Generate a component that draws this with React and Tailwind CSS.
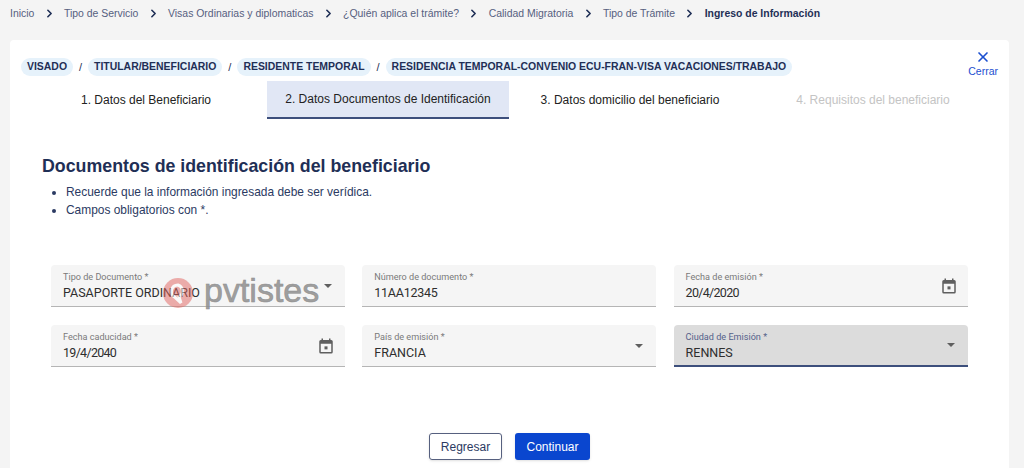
import React from "react";
import { ChevronRight, X } from "lucide-react";

const crumbs = [
  "Inicio",
  "Tipo de Servicio",
  "Visas Ordinarias y diplomaticas",
  "¿Quién aplica el trámite?",
  "Calidad Migratoria",
  "Tipo de Trámite",
];

const chips = [
  "VISADO",
  "TITULAR/BENEFICIARIO",
  "RESIDENTE TEMPORAL",
  "RESIDENCIA TEMPORAL-CONVENIO ECU-FRAN-VISA VACACIONES/TRABAJO",
];

const CalendarIcon = () => (
  <svg viewBox="0 0 24 24" className="h-[18px] w-[18px]" fill="#5f5f5f">
    <path
      fillRule="evenodd"
      d="M19 4h-1V2h-2v2H8V2H6v2H5a2 2 0 0 0-2 2v14a2 2 0 0 0 2 2h14a2 2 0 0 0 2-2V6a2 2 0 0 0-2-2zm0 16H5V9h14v11z"
    />
    <rect x="10" y="12.5" width="4" height="4" />
  </svg>
);

const Caret = () => <span className="h-0 w-0 border-x-[4.5px] border-t-[4.5px] border-x-transparent border-t-[#5f5f5f]" />;

const Field = ({ label, value, icon, active, tracking = "" }) => (
  <div
    className={`flex h-[42px] items-center justify-between rounded-t pl-3 pr-[10px] ${
      active ? "border-b-2 border-[#3d4f7c] bg-[#dcdcdc]" : "border-b border-[#b5b5b5] bg-[#f5f5f5]"
    }`}
  >
    <div className="font-['Roboto',sans-serif]">
      <div className={`text-[9.1px] leading-[12px] ${active ? "text-[#54618a]" : "text-[#7a7a7a]"}`}>{label}</div>
      <div className={`mt-[2px] text-[12.5px] leading-[15px] text-[#2e2e2e] ${tracking}`}>{value}</div>
    </div>
    {icon === "calendar" && <CalendarIcon />}
    {icon === "caret" && (
      <span className="mr-[3px] flex">
        <Caret />
      </span>
    )}
  </div>
);

export default function App() {
  return (
    <div className="h-[468px] overflow-hidden bg-[#f4f4f4] font-['Liberation_Sans',sans-serif]">
      {/* Breadcrumb */}
      <nav className="flex h-[40px] items-start pl-[10px] pt-[7px] text-[10.45px] leading-[13px] text-[#56607f]">
        {crumbs.map((c) => (
          <React.Fragment key={c}>
            <span>{c}</span>
            <ChevronRight className="mx-[8.3px] h-[13px] w-[13px] text-[#1f2f56]" strokeWidth={3} />
          </React.Fragment>
        ))}
        <span className="font-bold text-[#1f2f56]">Ingreso de Información</span>
      </nav>

      <main className="relative ml-[10px] h-[440px] w-[999px] rounded-t bg-white pt-[18px]">
        {/* Chips */}
        <div className="flex items-center pl-[11px] text-[10.45px] font-bold leading-[18px] text-[#1f2f56]">
          {chips.map((c, i) => (
            <React.Fragment key={c}>
              {i > 0 && <span className="w-[15px] text-center text-[11px] font-normal">/</span>}
              <span className="rounded-full bg-[#e6f2fb] px-[6px]">{c}</span>
            </React.Fragment>
          ))}
        </div>

        <button className="absolute right-[11px] top-[9px] flex flex-col items-center text-[10.5px] leading-[12px] text-[#1b4fd0]">
          <X className="h-[16px] w-[16px]" strokeWidth={2.5} />
          Cerrar
        </button>

        {/* Steps */}
        <div className="mt-[5px] flex pl-[15px] text-[12px] leading-[14px] text-[#222]">
          <div className="flex h-[38px] w-[242px] items-center justify-center">1. Datos del Beneficiario</div>
          <div className="flex h-[38px] w-[242px] items-center justify-center border-b-2 border-[#3d4f7c] bg-[#e1e7f5]">
            2. Datos Documentos de Identificación
          </div>
          <div className="flex h-[38px] w-[242px] items-center justify-center">3. Datos domicilio del beneficiario</div>
          <div className="flex h-[38px] w-[244px] items-center justify-center text-[#c4c4c4]">4. Requisitos del beneficiario</div>
        </div>

        {/* Heading */}
        <h1 className="ml-[32px] mt-[36px] text-[17.8px] font-bold leading-[22px] text-[#1f2f56]">
          Documentos de identificación del beneficiario
        </h1>
        <ul className="ml-[56px] mt-[6px] list-disc text-[11.93px] leading-[18px] text-[#2b3a62]">
          <li>Recuerde que la información ingresada debe ser verídica.</li>
          <li>Campos obligatorios con *.</li>
        </ul>

        {/* Form */}
        <div className="relative ml-[41px] mt-[46px] grid w-[917px] grid-cols-[repeat(3,294px)] gap-x-[17.3px] gap-y-[18px]">
          <Field label="Tipo de Documento *" value="PASAPORTE ORDINARIO" icon="caret" />
          <Field label="Número de documento *" value="11AA12345" tracking="tracking-[-0.25px]" />
          <Field label="Fecha de emisión *" value="20/4/2020" icon="calendar" tracking="tracking-[-0.7px]" />
          <Field label="Fecha caducidad *" value="19/4/2040" icon="calendar" tracking="tracking-[-0.7px]" />
          <Field label="País de emisión *" value="FRANCIA" icon="caret" />
          <Field label="Ciudad de Emisión *" value="RENNES" icon="caret" active />

          {/* Watermark */}
          <div className="pointer-events-none absolute left-[112px] top-[8px] flex items-center gap-[11px]">
            <svg viewBox="0 0 30 30" className="h-[30px] w-[30px] opacity-50">
              <circle cx="15" cy="15" r="15" fill="#e2645f" />
              <path d="M15 7a6.5 6.5 0 0 0-3 12.3L18 25l-2-6.2A6.5 6.5 0 0 0 15 7z" fill="none" stroke="#fff" strokeWidth="3" />
            </svg>
            <span className="mb-[5px] text-[34px] leading-[34px] text-[#8f8f8f]/85 [-webkit-text-stroke:0.6px_#8f8f8f]">pvtistes</span>
          </div>
        </div>

        {/* Actions */}
        <div className="mt-[66px] flex justify-center gap-[13px] text-[12px]">
          <button className="h-[27px] w-[73px] rounded-[3px] border border-[#56607f] bg-white text-[#2b3a62] shadow-sm">Regresar</button>
          <button className="h-[27px] w-[75px] rounded-[3px] bg-[#0a46cf] text-white shadow-sm">Continuar</button>
        </div>
      </main>
    </div>
  );
}
